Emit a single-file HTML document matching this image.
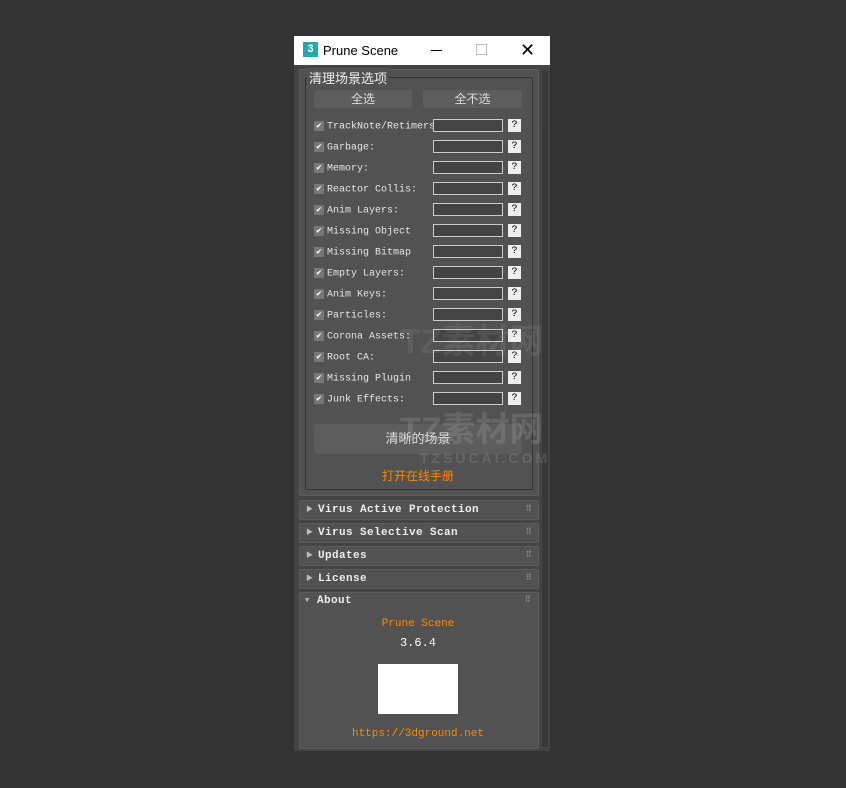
<!DOCTYPE html><html><head><meta charset="utf-8"><style>
body{margin:0;width:846px;height:788px;background:#333;position:relative;overflow:hidden;font-family:"Liberation Mono","Noto Sans CJK SC",monospace}
.a{position:absolute}
.win{left:294px;top:36px;width:256px;height:715px;background:#444}
.title{left:294px;top:36px;width:256px;height:29px;background:#fff;font-family:"Liberation Sans",sans-serif;font-size:13px;color:#000}
.ro{background:#525252;border:1px solid #5c5c5c;border-radius:2px}
.btn{background:#5d5d5d;border-radius:3px;color:#ddd;font-family:"Liberation Sans","Noto Sans CJK SC",sans-serif;font-size:12px;text-align:center}
.row{left:314px;font-size:10px;color:#e6e6e6;white-space:nowrap;letter-spacing:0px;font-family:"Liberation Mono",monospace}
.cb{display:inline-block;width:10px;height:10px;background:#777;color:#fff;font-size:9px;line-height:10px;text-align:center;vertical-align:middle;margin-right:3px}
.fld{left:433px;width:68px;height:11px;border:1px solid #ccc;background:#444}
.q{left:508px;width:13px;height:13px;background:#eee;color:#000;font-size:10px;text-align:center;line-height:13px}
.rh{left:299px;width:238px;height:18px;font-weight:bold;font-size:11px;color:#eee;letter-spacing:0.4px;line-height:18px}
.rh span.t{position:absolute;left:6px;font-size:7px;color:#bbb}
.rh span.n{position:absolute;left:18px}
.rh span.d{position:absolute;right:6px;font-size:8px;color:#888}
</style></head><body>
<div class="a win"></div>
<div class="a title">
<div class="a" style="left:9px;top:6px;width:15px;height:15px;background:#2aa;color:#fff;font-size:11px;font-weight:bold;text-align:center;line-height:15px">3</div>
<div class="a" style="left:29px;top:7px">Prune Scene</div>
<div class="a" style="left:137px;top:14px;width:11px;height:1px;background:#000"></div>
<div class="a" style="left:182px;top:8px;width:9px;height:9px;border:1px solid #bbb"></div>
<div class="a" style="left:226px;top:0px;font-size:18px;line-height:28px">✕</div>
</div>
<div class="a" style="left:542px;top:70px;width:6px;height:677px;background:#3a3a3a;border-radius:3px"></div>
<div class="a" style="left:542px;top:128px;width:6px;height:619px;background:#383838"></div>
<div class="a ro" style="left:299px;top:69px;width:238px;height:425px"></div>
<div class="a" style="left:305px;top:77px;width:226px;height:411px;border:1px solid #333;border-radius:2px"></div>
<div class="a" style="left:307px;top:68px;padding:0 2px;background:#525252;color:#eee;font-family:'Liberation Sans','Noto Sans CJK SC',sans-serif;font-size:13px">清理场景选项</div>
<div class="a btn" style="left:314px;top:90px;width:98px;height:18px;line-height:18px">全选</div>
<div class="a btn" style="left:423px;top:90px;width:99px;height:18px;line-height:18px">全不选</div>
<div class="a row" style="top:121px"><span class="cb">✔</span>TrackNote/Retimers</div>
<div class="a row" style="top:142px"><span class="cb">✔</span>Garbage:</div>
<div class="a row" style="top:163px"><span class="cb">✔</span>Memory:</div>
<div class="a row" style="top:184px"><span class="cb">✔</span>Reactor Collis:</div>
<div class="a row" style="top:205px"><span class="cb">✔</span>Anim Layers:</div>
<div class="a row" style="top:226px"><span class="cb">✔</span>Missing Object</div>
<div class="a row" style="top:247px"><span class="cb">✔</span>Missing Bitmap</div>
<div class="a row" style="top:268px"><span class="cb">✔</span>Empty Layers:</div>
<div class="a row" style="top:289px"><span class="cb">✔</span>Anim Keys:</div>
<div class="a row" style="top:310px"><span class="cb">✔</span>Particles:</div>
<div class="a row" style="top:331px"><span class="cb">✔</span>Corona Assets:</div>
<div class="a row" style="top:352px"><span class="cb">✔</span>Root CA:</div>
<div class="a row" style="top:373px"><span class="cb">✔</span>Missing Plugin</div>
<div class="a row" style="top:394px"><span class="cb">✔</span>Junk Effects:</div>
<div class="a fld" style="top:119px"></div><div class="a q" style="top:119px">?</div>
<div class="a fld" style="top:140px"></div><div class="a q" style="top:140px">?</div>
<div class="a fld" style="top:161px"></div><div class="a q" style="top:161px">?</div>
<div class="a fld" style="top:182px"></div><div class="a q" style="top:182px">?</div>
<div class="a fld" style="top:203px"></div><div class="a q" style="top:203px">?</div>
<div class="a fld" style="top:224px"></div><div class="a q" style="top:224px">?</div>
<div class="a fld" style="top:245px"></div><div class="a q" style="top:245px">?</div>
<div class="a fld" style="top:266px"></div><div class="a q" style="top:266px">?</div>
<div class="a fld" style="top:287px"></div><div class="a q" style="top:287px">?</div>
<div class="a fld" style="top:308px"></div><div class="a q" style="top:308px">?</div>
<div class="a fld" style="top:329px"></div><div class="a q" style="top:329px">?</div>
<div class="a fld" style="top:350px"></div><div class="a q" style="top:350px">?</div>
<div class="a fld" style="top:371px"></div><div class="a q" style="top:371px">?</div>
<div class="a fld" style="top:392px"></div><div class="a q" style="top:392px">?</div>
<div class="a btn" style="left:314px;top:424px;width:208px;height:30px;line-height:30px;font-size:13px">清晰的场景</div>
<div class="a" style="left:300px;top:467px;width:236px;text-align:center;color:#f80;font-family:'Liberation Sans','Noto Sans CJK SC',sans-serif;font-size:12px">打开在线手册</div>
<div class="a" style="left:400px;top:314px;font-family:'Liberation Sans','Noto Sans CJK SC',sans-serif;font-size:34px;font-weight:bold;color:rgba(255,255,255,0.08)">TZ素材网</div>
<div class="a" style="left:400px;top:402px;font-family:'Liberation Sans','Noto Sans CJK SC',sans-serif;font-size:34px;font-weight:bold;color:rgba(255,255,255,0.12)">TZ素材网</div>
<div class="a" style="left:420px;top:450px;font-family:'Liberation Sans',sans-serif;font-size:14px;font-weight:bold;letter-spacing:3px;color:rgba(255,255,255,0.12)">TZSUCAI.COM</div>
<div class="a ro rh" style="top:500px"><span class="t">▶</span><span class="n">Virus Active Protection</span><span class="d">⠿</span></div>
<div class="a ro rh" style="top:523px"><span class="t">▶</span><span class="n">Virus Selective Scan</span><span class="d">⠿</span></div>
<div class="a ro rh" style="top:546px"><span class="t">▶</span><span class="n">Updates</span><span class="d">⠿</span></div>
<div class="a ro rh" style="top:569px"><span class="t">▶</span><span class="n">License</span><span class="d">⠿</span></div>
<div class="a ro" style="left:299px;top:592px;width:238px;height:155px"></div>
<div class="a rh" style="top:592px"><span class="t">▼</span><span class="n">About</span><span class="d">⠿</span></div>
<div class="a" style="left:299px;top:618px;width:238px;text-align:center;color:#f80;font-size:11px">Prune Scene</div>
<div class="a" style="left:299px;top:636px;width:238px;text-align:center;color:#fff;font-size:12px">3.6.4</div>
<div class="a" style="left:378px;top:664px;width:80px;height:50px;background:#fff"></div>
<div class="a" style="left:299px;top:728px;width:238px;text-align:center;color:#f80;font-size:11px">https://3dground.net</div>
</body></html>
